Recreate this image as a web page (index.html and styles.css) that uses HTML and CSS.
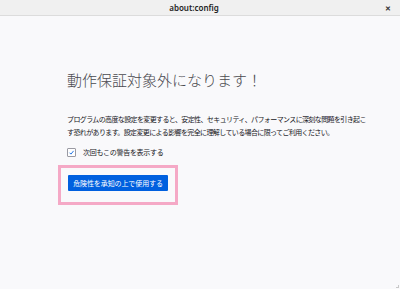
FILE: index.html
```html
<!DOCTYPE html>
<html lang="ja">
<head>
  <meta charset="UTF-8">
  <title>about:config</title>
  <link rel="stylesheet" href="styles.css">
</head>
<body>

  <!-- Window title bar -->
  <div class="titlebar">
    <span class="title">about:config</span>
    <span class="close">&#x2715;</span>
  </div>

  <!-- Warning page -->
  <div class="warning">
    <h1>動作保証対象外になります！</h1>
    <p class="desc">プログラムの高度な設定を変更すると、安定性、セキュリティ、パフォーマンスに深刻な問題を引き起こす恐れがあります。設定変更による影響を完全に理解している場合に限ってご利用ください。</p>

    <label class="check-row">
      <span class="checkbox">
        <svg width="9" height="9" viewBox="0 0 9 9">
          <path d="M2 4.8 L3.8 6.6 L7.2 2.4" fill="none" stroke="#0060df" stroke-width="1.1"/>
        </svg>
      </span>
      次回もこの警告を表示する
    </label>

    <div class="highlight">
      <button class="accept-btn">危険性を承知の上で使用する</button>
    </div>
  </div>

  <span class="grip"></span>

</body>
</html>
```

FILE: styles.css
```css
/* Basic Styles */
* {
  margin: 0;
  padding: 0;
  box-sizing: border-box;
}

html, body {
  height: 100%;
}

body {
  background-color: #f9f9fb;
  color: #15141a;
  font-family: "Noto Sans CJK JP", "Noto Sans", sans-serif;
  overflow: hidden;
  position: relative;
}

.titlebar {
  height: 16px;
  background-color: #f0f0f0;
  border-bottom: 1px solid #dcdcdc;
  display: flex;
  align-items: center;
  justify-content: center;
  position: relative;
}

.titlebar .title {
  font-family: "Noto Sans", sans-serif;
  font-size: 8px;
  font-weight: 600;
  color: #222;
  margin-left: -12px;
}

.titlebar .close {
  position: absolute;
  right: 9px;
  top: 3px;
  font-size: 7px;
  font-weight: bold;
  color: #333;
}

.warning {
  padding: 55px 0 0 67px;
}

.warning h1 {
  font-size: 15px;
  line-height: 18px;
  font-weight: 300;
  color: #4a4a4f;
}

.desc {
  width: 302px;
  margin-top: 24px;
  font-size: 7px;
  letter-spacing: -0.62px;
  line-height: 13px;
  color: #15141a;
}

.check-row {
  display: flex;
  align-items: center;
  height: 10px;
  margin-top: 8px;
  font-size: 7px;
  letter-spacing: -0.3px;
  color: #15141a;
}

.checkbox {
  width: 9px;
  height: 9px;
  border: 1px solid #9a9aa3;
  background-color: #fff;
  border-radius: 1px;
  margin-right: 7px;
  display: flex;
  align-items: center;
  justify-content: center;
}

.checkbox svg {
  display: block;
}

/* pink annotation around the button */
.highlight {
  display: inline-block;
  margin: 8px 0 0 -9px;
  border: 3px solid #f5a9c6;
  padding: 7px 7px 11px 7px;
}

.accept-btn {
  display: block;
  width: 100px;
  height: 16px;
  background-color: #0060df;
  color: #fff;
  border: none;
  border-radius: 1px;
  font-family: "Noto Sans CJK JP", sans-serif;
  font-size: 7px;
  letter-spacing: -0.1px;
}

.grip {
  position: absolute;
  right: 1px;
  bottom: 1px;
  width: 3px;
  height: 3px;
  border-right: 1px solid #c8c8c8;
  border-bottom: 1px solid #c8c8c8;
}
```
